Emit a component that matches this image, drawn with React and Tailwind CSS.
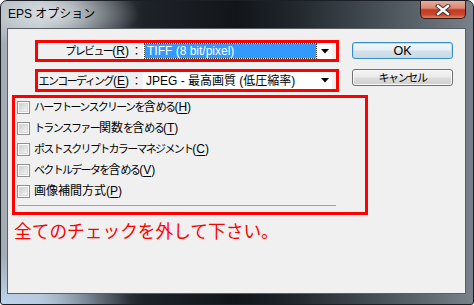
const JP = ({ text }) => (
  <>
    {Array.from(text).map((ch, i) =>
      /[\u4e00-\u9fff]/.test(ch) ? (
        <span key={i} className="text-[12px] tracking-[0px]">
          {ch}
        </span>
      ) : (
        <span key={i}>{ch}</span>
      )
    )}
  </>
);

const Mn = ({ k, colon }) => (
  <span className="tracking-[0px] text-[12px]">
    (<span className="underline underline-offset-2">{k}</span>){colon ? <span className="text-[11px] tracking-[-1px]">{" "}：</span> : null}
  </span>
);

const Check = ({ label, k }) => (
  <div className="h-[18px] flex items-center pl-[2px]">
    <div className="w-[13px] h-[13px] border border-[#8e8f8f] bg-white p-px shrink-0">
      <div className="w-full h-full bg-[linear-gradient(135deg,#cfcfcf,#f4f4f4)] border border-[#d8d8d8]" />
    </div>
    <span className="ml-[4px] text-[11px] leading-[14px] tracking-[-1.7px] text-black whitespace-nowrap">
      <JP text={label} />
      <Mn k={k} />
    </span>
  </div>
);

const Arrow = () => (
  <svg width="8" height="5" viewBox="0 0 8 5" className="shrink-0">
    <path d="M0 0 H8 L4 4.5 Z" fill="#000" />
  </svg>
);

export default function App() {
  return (
    <div className="w-[474px] h-[305px] bg-white font-['Liberation_Sans','Noto_Sans_CJK_JP',sans-serif]">
      <div className="relative w-[474px] h-[305px] flex flex-col rounded-t-[7px] rounded-b-[3px] border border-[#1b2026] bg-[radial-gradient(ellipse_90px_34px_at_48px_13px,rgba(220,226,231,0.95),rgba(220,226,231,0)),radial-gradient(ellipse_130px_50px_at_0px_305px,rgba(190,214,240,1),rgba(190,214,240,0)),linear-gradient(to_right,#a3acb3_0%,#aab3ba_8%,#4a5158_20%,#1e2329_30%,#12161b_50%,#20262c_62%,#3e464d_76%,#5f686f_90%,#79828a_100%)]">
        {/* title bar */}
        <div className="h-[27px] flex items-start shrink-0">
          <div className="pl-[7px] pt-[6px] text-[12px] leading-[14px] text-black">EPS オプション</div>
          <div className="ml-auto mr-[7px] w-[46px] h-[18px] rounded-b-[5px] border border-t-0 border-[#3b1810] bg-[linear-gradient(to_bottom,#e9ab9b_0%,#d88a75_42%,#c2391f_52%,#c9482d_80%,#de8466_100%)] flex items-center justify-center">
            <svg width="16" height="12" viewBox="0 0 16 12">
              <path d="M3 2 L13 10 M13 2 L3 10" stroke="#3a2a28" strokeWidth="4.2" strokeLinecap="square" />
              <path d="M3 2 L13 10 M13 2 L3 10" stroke="#ffffff" strokeWidth="2.4" strokeLinecap="square" />
            </svg>
          </div>
        </div>

        {/* content */}
        <div className="ml-[6px] mr-[7px] h-[266px] border border-[#56606a] bg-[#f0f0f0] flex flex-col shrink-0">
          <div className="flex pt-[11px]">
            <div className="ml-[27px] w-[304px] flex flex-col gap-[7px]">
              <div className="h-[22px] border-[3px] border-[#ff0000] flex items-stretch">
                <div className="w-[105px] flex items-center justify-end pr-[2px] text-[11px] leading-[14px] tracking-[-1.6px] text-black whitespace-nowrap">
                  プレビュー<Mn k="R" colon />
                </div>
                <div className="w-[189px] bg-white flex items-center pl-[2px] pr-[2px]">
                  <div className="h-[14px] w-[171px] bg-[#3399ff] outline outline-1 outline-dotted outline-[#333] flex items-center pl-[2px] text-[12px] leading-[14px] text-white whitespace-nowrap">
                    TIFF (8 bit/pixel)
                  </div>
                  <div className="flex-1 flex justify-center pl-[3px]">
                    <Arrow />
                  </div>
                </div>
              </div>
              <div className="h-[23px] border-[3px] border-[#ff0000] flex items-stretch">
                <div className="w-[105px] flex items-center justify-end pr-[2px] text-[11px] leading-[14px] tracking-[-1.6px] text-black whitespace-nowrap">
                  エンコーディング<Mn k="E" colon />
                </div>
                <div className="w-[189px] bg-white flex items-center pl-[3px] pr-[2px]">
                  <div className="w-[170px] text-[12px] leading-[14px] text-black whitespace-nowrap">
                    JPEG - 最高画質 (低圧縮率)
                  </div>
                  <div className="flex-1 flex justify-center pl-[3px]">
                    <Arrow />
                  </div>
                </div>
              </div>
            </div>
            <div className="ml-[13px] w-[101px] flex flex-col">
              <div className="mt-[2px] h-[17px] rounded-[3px] border border-[#3a8cc6] bg-[linear-gradient(to_bottom,#f3f8fb_0%,#e6eff5_48%,#d3e2ec_52%,#c9dbe7_100%)] shadow-[inset_0_0_0_1px_#a8e4f8] flex items-center justify-center text-[12.5px] leading-[14px] text-black">
                OK
              </div>
              <div className="mt-[10px] h-[17px] rounded-[3px] border border-[#707070] bg-[linear-gradient(to_bottom,#f3f3f3_0%,#ebebeb_48%,#dddddd_52%,#cfcfcf_100%)] shadow-[inset_0_0_0_1px_#fafafa] flex items-center justify-center text-[11px] leading-[14px] tracking-[-1.4px] text-black">
                キャンセル
              </div>
            </div>
          </div>

          <div className="ml-[4px] mt-[3px] w-[356px] h-[120px] border-[3px] border-[#ff0000] flex flex-col">
            <div className="flex flex-col gap-[3px]">
              <Check label="ハーフトーンスクリーンを含める" k="H" />
              <Check label="トランスファー関数を含める" k="T" />
              <Check label="ポストスクリプトカラーマネジメント" k="C" />
              <Check label="ベクトルデータを含める" k="V" />
              <Check label="画像補間方式" k="P" />
            </div>
            <div className="ml-[3px] mt-[5px] w-[318px] h-px bg-[#a0a0a0]" />
          </div>

          <div className="ml-[6px] mt-[5px] text-[17.7px] leading-[24px] text-[#ff0000] whitespace-nowrap">
            全てのチェックを外して下さい。
          </div>
        </div>
      </div>
    </div>
  );
}
